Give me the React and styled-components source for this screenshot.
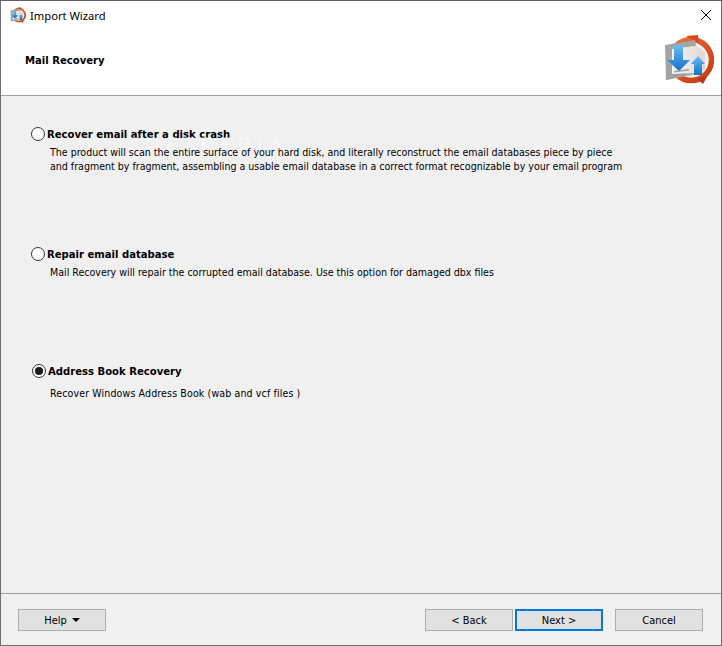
import React, { useId } from 'react'
import styled, { createGlobalStyle } from 'styled-components'

const tahoma = `Tahoma, "DejaVu Sans", "Noto Sans", sans-serif`

const GlobalStyle = createGlobalStyle`
  html, body { margin: 0; padding: 0; background: #f0f0f0; }
  body { font-family: ${tahoma}; font-stretch: condensed; }
`

const Window = styled.div`
  width: 722px;
  height: 646px;
  box-sizing: border-box;
  border: 1px solid #6e6e6e;
  border-top-color: #5f5f5f;
  display: flex;
  flex-direction: column;
  background: #f0f0f0;
  color: #000;
`

const Top = styled.header`
  background: #fff;
  height: 94px;
  flex: none;
  display: flex;
  flex-direction: column;
  border-bottom: 1px solid #a0a0a0;
`

const TitleBar = styled.div`
  height: 28px;
  flex: none;
  display: flex;
  align-items: center;
  padding: 0 9px 0 8px;
  gap: 4px;
`

const Title = styled.span`
  font-family: "Noto Sans", sans-serif;
  font-stretch: normal;
  font-size: 11.2px;
  flex: 1;
`

const Close = styled.button`
  border: 0;
  background: none;
  padding: 0;
  width: 12px;
  height: 12px;
  display: flex;
`

const Banner = styled.div`
  flex: 1;
  display: flex;
  align-items: flex-start;
  justify-content: space-between;
  padding: 5px 7px 0 24px;
`

const Heading = styled.h1`
  margin: 20px 0 0;
  font-size: 11.2px;
  line-height: 14px;
  font-weight: 700;
`

const Options = styled.main`
  position: relative;
  flex: 1;
  display: flex;
  flex-direction: column;
  padding: 30px 0 0 30px;
`

const Watermark = styled.span`
  position: absolute;
  left: 126px;
  top: 38px;
  z-index: 1;
  pointer-events: none;
  font-family: "Liberation Sans", sans-serif;
  font-stretch: normal;
  font-size: 18px;
  font-weight: 700;
  letter-spacing: 6.5px;
  color: rgba(255, 255, 255, 0.4);
`

const Option = styled.section`
  height: ${p => p.$height}px;
  flex: none;
`

const Choice = styled.label`
  display: flex;
  align-items: center;
  gap: 2px;
  height: 16px;
  margin-left: ${p => p.$indent || 0}px;
  font-size: 11.2px;
  font-weight: 700;
`

const Radio = styled.span`
  width: 14px;
  height: 14px;
  box-sizing: border-box;
  border: 1px solid #333;
  border-radius: 50%;
  background: #fff;
  display: flex;
  align-items: center;
  justify-content: center;
  &::after {
    content: '';
    display: ${p => (p.$checked ? 'block' : 'none')};
    width: 8px;
    height: 8px;
    border-radius: 50%;
    background: #1a1a1a;
  }
`

const Description = styled.p`
  margin: ${p => p.$gap || 3}px 0 0 19px;
  font-size: 10.55px;
  line-height: 14px;
  letter-spacing: ${p => p.$spacing || 0}px;
  white-space: pre-line;
`

const Footer = styled.footer`
  flex: none;
  height: 52px;
  box-sizing: border-box;
  border-top: 1px solid #a0a0a0;
  display: flex;
  align-items: flex-start;
  padding: 15px 18px 0 17px;
`

const Button = styled.button`
  width: 88px;
  height: 22px;
  box-sizing: border-box;
  background: #e1e1e1;
  border: ${p => (p.$focused ? '2px solid #0078d7' : '1px solid #adadad')};
  margin-left: ${p => p.$gap || 0}px;
  font-family: ${tahoma};
  font-stretch: condensed;
  font-size: 11px;
  color: #000;
  padding: 0;
  display: flex;
  align-items: center;
  justify-content: center;
  gap: 5px;
`

const Caret = styled.span`
  width: 0;
  height: 0;
  border-left: 4px solid transparent;
  border-right: 4px solid transparent;
  border-top: 4px solid #000;
`

const Spacer = styled.div`
  flex: 1;
`

const AppIcon = ({ size }) => {
  const id = useId()
  return (
    <svg width={size} height={size} viewBox="0 0 54 54">
      <defs>
        <linearGradient id={`${id}r`} x1="0" y1="0" x2="1" y2="1">
          <stop offset="0" stopColor="#f0703a" />
          <stop offset="1" stopColor="#c23a14" />
        </linearGradient>
        <linearGradient id={`${id}b`} x1="0" y1="0" x2="0" y2="1">
          <stop offset="0" stopColor="#6cbcf0" />
          <stop offset="1" stopColor="#1272c8" />
        </linearGradient>
        <linearGradient id={`${id}p`} x1="0" y1="0" x2="1" y2="0">
          <stop offset="0" stopColor="#f4f4f2" />
          <stop offset="1" stopColor="#dcd9d4" />
        </linearGradient>
      </defs>
      <circle cx="31" cy="26" r="20.500" fill="#f3efea" stroke={`url(#${id}r)`} strokeWidth="5.500" />
      <path d="M26 2l12-1 1 8z" fill="#d9481c" />
      <path d="M37 45l10-2-4 7z" fill="#b83512" />
      <path d="M5 11l30-5 1 6-24 3v24l24-2v3L7 46H6z" fill="#a3a3a0" />
      <path d="M12 15l24-3 9 6v18l-9 3-24 1z" fill={`url(#${id}p)`} />
      <path d="M14 11h9v15h7L19 37 7 26h7z" fill={`url(#${id}b)`} />
      <path d="M38 22l7 8h-3v11h-8V30h-3z" fill={`url(#${id}b)`} />
      <path d="M14 37l15-2v1.500l-15 2zM14 41l11-1.500V41l-11 1.500z" fill="#9d9d9d" />
    </svg>
  )
}

const CloseIcon = () => (
  <svg width="12" height="12" viewBox="0 0 12 12">
    <path d="M1 1l10 10M11 1L1 11" stroke="#000" strokeWidth="1" fill="none" />
  </svg>
)

export default function App() {
  return (
    <Window>
      <GlobalStyle />
      <Top>
        <TitleBar>
          <AppIcon size={17} />
          <Title>Import Wizard</Title>
          <Close aria-label="Close"><CloseIcon /></Close>
        </TitleBar>
        <Banner>
          <Heading>Mail Recovery</Heading>
          <AppIcon size={54} />
        </Banner>
      </Top>
      <Options>
        <Watermark>SOFTPEDIA</Watermark>
        <Option $height={120}>
          <Choice><Radio />Recover email after a disk crash</Choice>
          <Description>{'The product will scan the entire surface of your hard disk, and literally reconstruct the email databases piece by piece\nand fragment by fragment, assembling a usable email database in a correct format recognizable by your email program'}</Description>
        </Option>
        <Option $height={117}>
          <Choice><Radio />Repair email database</Choice>
          <Description>Mail Recovery will repair the corrupted email database. Use this option for damaged dbx files</Description>
        </Option>
        <Option $height={100}>
          <Choice $indent={1}><Radio $checked />Address Book Recovery</Choice>
          <Description $gap={7} $spacing={0.12}>Recover Windows Address Book (wab and vcf files )</Description>
        </Option>
      </Options>
      <Footer>
        <Button>Help <Caret /></Button>
        <Spacer />
        <Button>&lt; Back</Button>
        <Button $gap={2} $focused>Next &gt;</Button>
        <Button $gap={12}>Cancel</Button>
      </Footer>
    </Window>
  )
}
